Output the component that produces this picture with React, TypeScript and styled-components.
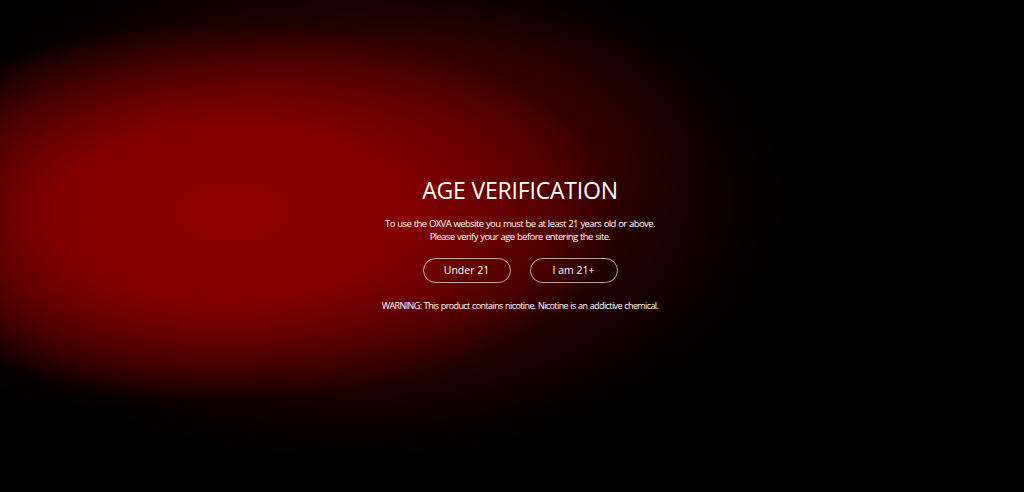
import styled, { createGlobalStyle } from 'styled-components';

const GlobalStyle = createGlobalStyle`
    html, body {
        margin: 0;
        padding: 0;
        background: #000;
    }
    body {
        font-family: 'Open Sans', 'Noto Sans', sans-serif;
    }
`

// red glow: a bright core on the left, a dim lift to the upper right and a wide halo
const Backdrop = styled.div`
    width: 100vw;
    height: 100vh;
    box-sizing: border-box;
    padding: 0 0 6px 16px;
    display: flex;
    align-items: center;
    justify-content: center;
    background:
        radial-gradient(ellipse 390px 190px at 230px 212px, rgba(142, 0, 0, 1) 0%, rgba(138, 0, 0, 0.92) 45%, rgba(128, 0, 0, 0.55) 72%, rgba(120, 0, 0, 0) 100%),
        radial-gradient(ellipse 260px 140px at 450px 140px, rgba(90, 0, 0, 0.5) 0%, rgba(90, 0, 0, 0) 100%),
        radial-gradient(ellipse 200px 110px at 110px 300px, rgba(110, 0, 0, 0.4) 0%, rgba(110, 0, 0, 0) 100%),
        radial-gradient(ellipse 440px 260px at 350px 200px, #400000 0%, #300000 50%, #120000 80%, #000 100%),
        #000;
`

const Panel = styled.div`
    display: flex;
    flex-direction: column;
    align-items: center;
    color: #fff;
    text-align: center;
`

const Title = styled.h1`
    margin: 0 0 12px;
    font-size: 23px;
    font-weight: 400;
    line-height: 30px;
    letter-spacing: -0.2px;
`

const Note = styled.p<{ $small?: boolean }>`
    margin: 0;
    font-size: ${p => (p.$small ? '9px' : '9.5px')};
    line-height: 13px;
    letter-spacing: -0.6px;
    word-spacing: 0.6px;
`

const Actions = styled.div`
    display: flex;
    gap: 19px;
    margin: 15px 0 16px;
`

const Choice = styled.button`
    width: 88px;
    height: 25px;
    border: 1px solid rgba(255, 255, 255, 0.65);
    border-radius: 13px;
    background: transparent;
    color: #fff;
    font-family: inherit;
    font-size: 10.5px;
    cursor: pointer;
`

const App = () => (
    <>
        <GlobalStyle />
        <Backdrop>
            <Panel>
                <Title>AGE VERIFICATION</Title>
                <Note>
                    To use the OXVA website you must be at least 21 years old or above.
                    <br />
                    Please verify your age before entering the site.
                </Note>
                <Actions>
                    <Choice>Under 21</Choice>
                    <Choice>I am 21+</Choice>
                </Actions>
                <Note $small>WARNING: This product contains nicotine. Nicotine is an addictive chemical.</Note>
            </Panel>
        </Backdrop>
    </>
)

export default App;
